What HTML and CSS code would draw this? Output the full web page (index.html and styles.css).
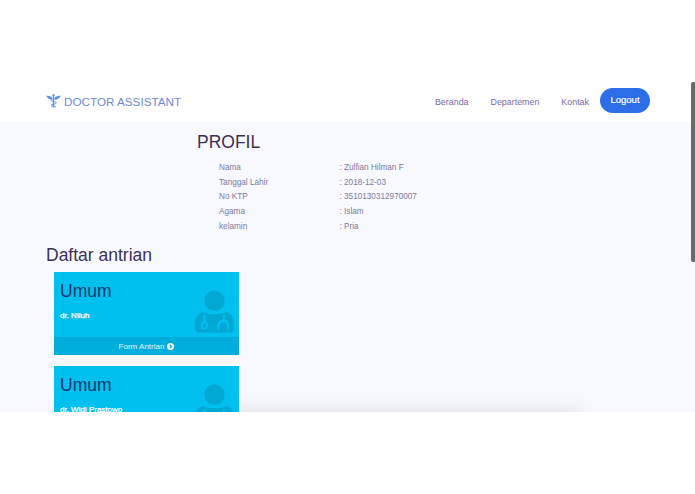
FILE: index.html
```html
<!DOCTYPE html>
<html lang="id">
<head>
<meta charset="utf-8">
<title>Doctor Assistant</title>
<link rel="stylesheet" href="styles.css">
</head>
<body>
<div class="viewport">
  <header class="nav">
    <a class="brand">
      <svg class="brand-icon" viewBox="0 0 15 14" width="15" height="14" aria-hidden="true">
        <path d="M7.5 1V13.5" stroke="#5a94e6" stroke-width="1.4" fill="none"/>
        <circle cx="7.5" cy="1.2" r="1.1" fill="#5a94e6"/>
        <path d="M0.2 1.8C2.5 1.6 4.5 2.2 6.4 3.4V6C3.8 5.8 1.4 4.6 0.2 1.8ZM14.8 1.8C12.5 1.6 10.5 2.2 8.6 3.4V6C11.2 5.8 13.6 4.6 14.8 1.8Z" fill="#5a94e6"/>
        <path d="M4.8 6.6C7 7.6 10.4 7.4 10.4 9C10.4 10.3 5 10 5 11.3C5 12.3 8.8 12.2 9.8 12.8" stroke="#5a94e6" stroke-width="1" fill="none"/>
      </svg>
      <span class="brand-name">DOCTOR ASSISTANT</span>
    </a>
    <nav class="menu">
      <a class="menu-link">Beranda</a>
      <a class="menu-link">Departemen</a>
      <a class="menu-link">Kontak</a>
      <a class="logout">Logout</a>
    </nav>
  </header>
  <main class="content">
    <section class="profile">
      <h2 class="profile-title">PROFIL</h2>
      <dl class="profile-list">
        <dt>Nama</dt><dd>: Zulfian Hilman F</dd>
        <dt>Tanggal Lahir</dt><dd>: 2018-12-03</dd>
        <dt>No KTP</dt><dd>: 3510130312970007</dd>
        <dt>Agama</dt><dd>: Islam</dd>
        <dt>kelamin</dt><dd>: Pria</dd>
      </dl>
    </section>
    <h2 class="queue-title">Daftar antrian</h2>
    <div class="cards">
      <article class="card">
        <div class="card-body">
          <h3 class="card-title">Umum</h3>
          <p class="card-doctor">dr. Niluh</p>
          <svg class="card-icon" viewBox="0 0 40 44" width="39" height="43" aria-hidden="true">
            <circle cx="20" cy="11" r="10.5"/>
            <path fill-rule="evenodd" d="M8 22.5C3 24 0 28 0 34V40C0 42 1.5 43.5 3.5 43.5H36.5C38.5 43.5 40 42 40 40V34C40 28 37 24 32 22.5C28 25.5 12 25.5 8 22.5ZM9.3 25.5H11V32.6A4 4 0 1 1 8.5 32.6V26ZM9.8 34.3A2.2 2.2 0 1 0 9.8 38.7A2.2 2.2 0 1 0 9.8 34.3ZM28.5 25.5H30.5V30.2C33.5 31 35 33 35 35.5V40.5H32.8V35.8C32.8 32 25.2 32 25.2 35.8V40.5H23V35.5C23 33 24.8 31 28.5 30.2Z"/>
          </svg>
        </div>
        <a class="card-footer">Form Antrian
          <svg class="arrow" viewBox="0 0 10 10" width="7" height="7" aria-hidden="true">
            <circle cx="5" cy="5" r="5" fill="#fff"/>
            <path d="M4 2.5L6.5 5L4 7.5" stroke="#00aedb" stroke-width="1.6" fill="none"/>
          </svg>
        </a>
      </article>
      <article class="card">
        <div class="card-body">
          <h3 class="card-title">Umum</h3>
          <p class="card-doctor">dr. Widi Prastowo</p>
          <svg class="card-icon" viewBox="0 0 40 44" width="39" height="43" aria-hidden="true">
            <circle cx="20" cy="11" r="10.5"/>
            <path fill-rule="evenodd" d="M8 22.5C3 24 0 28 0 34V40C0 42 1.5 43.5 3.5 43.5H36.5C38.5 43.5 40 42 40 40V34C40 28 37 24 32 22.5C28 25.5 12 25.5 8 22.5ZM9.3 25.5H11V32.6A4 4 0 1 1 8.5 32.6V26ZM9.8 34.3A2.2 2.2 0 1 0 9.8 38.7A2.2 2.2 0 1 0 9.8 34.3ZM28.5 25.5H30.5V30.2C33.5 31 35 33 35 35.5V40.5H32.8V35.8C32.8 32 25.2 32 25.2 35.8V40.5H23V35.5C23 33 24.8 31 28.5 30.2Z"/>
          </svg>
        </div>
      </article>
    </div>
    <div class="floating-shadow"></div>
  </main>
  <div class="scrollbar"></div>
</div>
</body>
</html>
```

FILE: styles.css
```css
* { box-sizing: border-box; }
html, body { margin: 0; padding: 0; background: #fff; overflow: hidden; }
body { font-family: "Liberation Sans", Arial, sans-serif; height: 494px; }
.viewport { padding-top: 82px; height: 494px; position: relative; }
.nav {
  height: 40px;
  display: flex;
  align-items: center;
  justify-content: space-between;
  padding: 0 45px 2px 46px;
  background: #fff;
}
.brand { display: flex; align-items: center; gap: 3px; color: #7189d6; font-size: 11.7px; }
.brand-icon { display: block; margin-top: -1px; }
.brand-name { font-weight: 400; }
.menu { display: flex; align-items: center; }
.menu-link { color: #7a6aa3; font-size: 8.9px; margin-right: 22px; padding-top: 1px; }
.menu-link:nth-child(3) { margin-right: 11px; }
.logout {
  width: 50px;
  height: 25px;
  margin-top: -2px;
  line-height: 24px;
  text-align: center;
  border-radius: 13px;
  background: #2b6ee8;
  color: #fff;
  font-size: 9.5px;
  -webkit-text-stroke: 0.2px #fff;
}
.content {
  height: 290px;
  background: #f8f9fe;
  overflow: hidden;
  position: relative;
}
.profile { padding: 10px 0 0 197px; }
.profile-title { margin: 0; font-size: 17.5px; line-height: 21px; font-weight: 400; color: #3b3155; }
.profile-list {
  margin: 8px 0 0 22px;
  display: grid;
  grid-template-columns: 120.5px 1fr;
  grid-auto-rows: 14.7px;
  font-size: 8.2px;
  line-height: 14.7px;
  color: #817a9a;
}
.profile-list dt, .profile-list dd { margin: 0; }
.queue-title { margin: 11px 0 0 46px; font-size: 17.5px; line-height: 21px; font-weight: 400; color: #3b3155; }
.cards { margin: 6px 0 0 54px; width: 185px; display: flex; flex-direction: column; gap: 11px; position: relative; z-index: 1; }
.card { background: #00c0ef; height: 83px; position: relative; }
.card-body { height: 65px; padding: 9px 6px 0; position: relative; }
.card-title { margin: 0; font-size: 17.5px; line-height: 21px; font-weight: 400; color: #12386e; }
.card-doctor { margin: 9px 0 0; font-size: 8px; line-height: 10px; font-weight: 400; -webkit-text-stroke: 0.25px #fff; color: #fff; }
.card-icon { position: absolute; right: 5px; top: 18px; fill: #00a8d2; }
.card-footer {
  display: flex;
  justify-content: center;
  align-items: center;
  gap: 3px;
  height: 18px;
  background: #00aedb;
  color: #e6f7fc;
  font-size: 8px;
}
.floating-shadow {
  position: absolute;
  left: 200px;
  right: 115px;
  top: 296px;
  height: 40px;
  box-shadow: 0 0 24px rgba(60, 70, 90, 0.28);
}
.scrollbar {
  position: absolute;
  left: 691px;
  top: 82px;
  width: 4px;
  height: 180px;
  background: #6b6b6b;
  border-radius: 2px 0 0 2px;
}
```
